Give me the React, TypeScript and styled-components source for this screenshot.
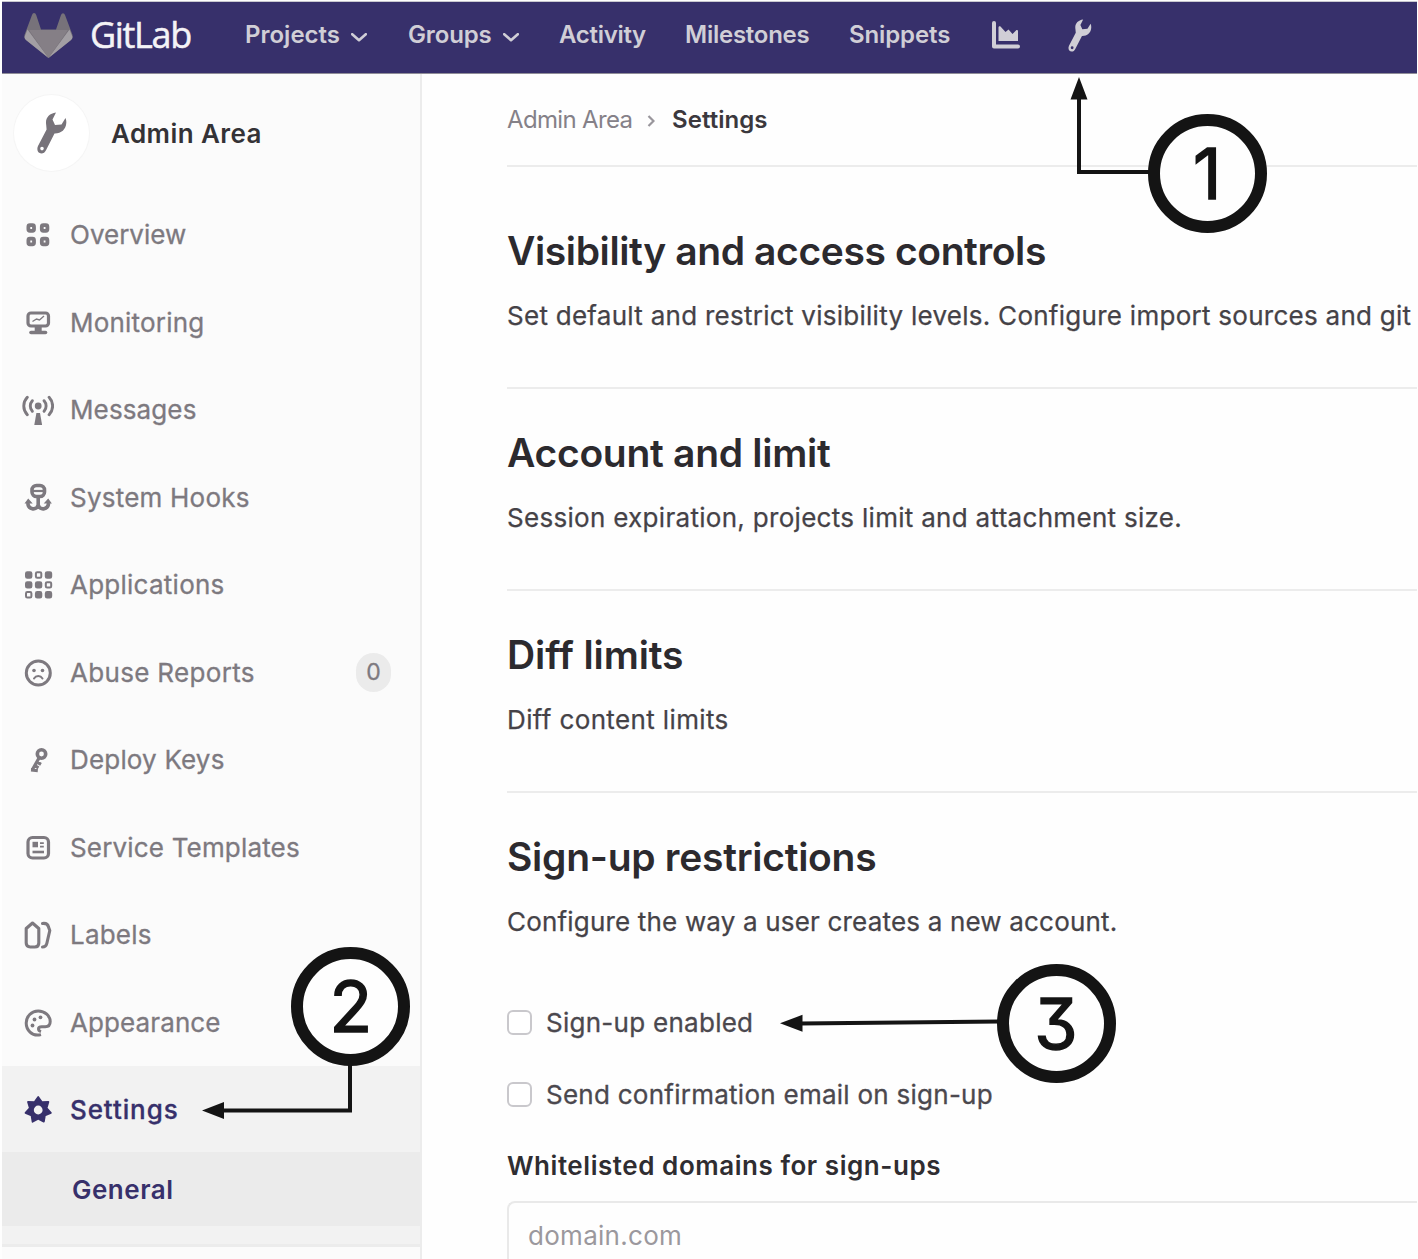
import React from "react";
import styled, { createGlobalStyle } from "styled-components";

const indigo = "#37306b";
const ink = "#141414";

const GlobalStyle = createGlobalStyle`
  * { box-sizing: border-box; }
  html, body { margin: 0; padding: 0; overflow: hidden; background: #fff; }
  body { font-family: Inter, "Liberation Sans", sans-serif; color: #2f2d31; }
  svg { display: block; flex: none; }
`;

const Page = styled.div`
  position: relative;
  width: 1418px;
  height: 1259px;
  padding: 2px 1px 0 2px;
  display: flex;
  flex-direction: column;
  overflow: hidden;
  background: #fefefe;
`;

const Header = styled.header`
  flex: none;
  height: 72px;
  padding: 0 0 7px 22px;
  display: flex;
  align-items: center;
  background: ${indigo};
  border-bottom: 1px solid #8f8d98;
  box-shadow: 0 -1px 0 #c9c8cf;
`;

const Brand = styled.div<{ $track: number }>`
  width: 155px;
  margin-left: 17px;
  padding-top: 1px;
  font: 400 36px/44px "Open Sans", sans-serif;
  letter-spacing: ${(p) => p.$track}px;
  color: #f4f3f6;
  -webkit-text-stroke: 0.5px #f4f3f6;
  white-space: nowrap;
`;

const LogoBox = styled.div`
  padding-top: 3px;
`;

const NavItem = styled.a<{ $width: number; $track: number }>`
  width: ${(p) => p.$width}px;
  padding-top: 1px;
  display: flex;
  align-items: center;
  gap: 11px;
  font-size: 24px;
  font-weight: 600;
  line-height: 30px;
  letter-spacing: ${(p) => p.$track}px;
  color: #d0ced6;
  white-space: nowrap;
`;

const NavIcon = styled.span<{ $width: number }>`
  width: ${(p) => p.$width}px;
  padding-top: 2px;
  color: #d0ced6;
`;

const Body = styled.div`
  flex: 1;
  min-height: 0;
  display: flex;
`;

const Sidebar = styled.aside`
  flex: none;
  width: 420px;
  display: flex;
  flex-direction: column;
  background: #fbfbfb;
  border-right: 2px solid #ececec;
`;

const Context = styled.div`
  flex: none;
  height: 117.25px;
  padding: 21px 0 0 12px;
  display: flex;
  align-items: flex-start;
  gap: 22px;
`;

const Avatar = styled.div`
  width: 75px;
  height: 76px;
  border-radius: 50%;
  background: #fff;
  box-shadow: 0 0 0 1px #f5f5f5;
  display: flex;
  align-items: center;
  justify-content: center;
  color: #77737a;
`;

const ContextTitle = styled.div<{ $track: number }>`
  font-size: 26px;
  font-weight: 600;
  line-height: 78px;
  letter-spacing: ${(p) => p.$track}px;
  color: #343236;
`;

const Item = styled.a<{ $active?: boolean }>`
  flex: none;
  height: ${(p) => (p.$active ? 86 : 87.5)}px;
  padding: ${(p) => (p.$active ? "1px" : "0")} 29px 0 20px;
  display: flex;
  align-items: center;
  gap: 16px;
  color: ${(p) => (p.$active ? indigo : "#7d797f")};
  background: ${(p) => (p.$active ? "#f2f2f2" : "transparent")};
`;

const ItemLabel = styled.span<{ $track: number; $strong?: boolean }>`
  flex: 1;
  font-size: 26px;
  font-weight: ${(p) => (p.$strong ? 500 : 400)};
  line-height: 36px;
  letter-spacing: ${(p) => p.$track}px;
  -webkit-text-stroke: 0.3px currentColor;
  white-space: nowrap;
`;

const Count = styled.span`
  width: 35px;
  height: 39px;
  border-radius: 18px;
  background: #ebebeb;
  font-size: 23px;
  line-height: 39px;
  text-align: center;
  -webkit-text-stroke: 0.3px currentColor;
`;

const SubItem = styled.a<{ $track: number }>`
  flex: none;
  height: 74px;
  padding-left: 70px;
  background: #ebebeb;
  color: ${indigo};
  font-size: 26px;
  font-weight: 600;
  line-height: 75px;
  letter-spacing: ${(p) => p.$track}px;
`;

const SubEnd = styled.div`
  flex: none;
  height: 21px;
  background: #f2f2f2;
  border-bottom: 3px solid #ececec;
`;

const Content = styled.main`
  flex: 1;
  min-width: 0;
  padding-left: 85px;
  display: flex;
  flex-direction: column;
`;

const Crumbs = styled.nav`
  flex: none;
  height: 93px;
  border-bottom: 2px solid #ececec;
  display: flex;
  align-items: flex-start;
  padding-top: 30px;
  font-size: 24px;
  line-height: 32px;
  white-space: nowrap;
`;

const Crumb = styled.span<{ $current?: boolean; $track: number; $width: number }>`
  width: ${(p) => p.$width}px;
  color: ${(p) => (p.$current ? "#3b383d" : "#858188")};
  font-weight: ${(p) => (p.$current ? 600 : 400)};
  letter-spacing: ${(p) => p.$track}px;
`;

const CrumbArrow = styled.span`
  width: 25px;
  padding-top: 11px;
`;

const Section = styled.section<{ $height?: number; $top: number }>`
  flex: none;
  height: ${(p) => (p.$height ? p.$height + "px" : "auto")};
  padding-top: ${(p) => p.$top}px;
  border-bottom: ${(p) => (p.$height ? "2px solid #ececec" : "none")};
  white-space: nowrap;
`;

const Heading = styled.h2<{ $track: number }>`
  margin: 0 0 24px;
  font-size: 39px;
  font-weight: 600;
  line-height: 48px;
  letter-spacing: ${(p) => p.$track}px;
  color: #2c2a2e;
`;

const Description = styled.p<{ $track: number }>`
  margin: 0;
  font-size: 26px;
  line-height: 33px;
  letter-spacing: ${(p) => p.$track}px;
  -webkit-text-stroke: 0.25px currentColor;
  color: #454247;
`;

const Options = styled.div`
  padding-top: 66px;
  display: flex;
  flex-direction: column;
  gap: 36px;
`;

const Option = styled.label<{ $track: number }>`
  display: flex;
  align-items: center;
  gap: 14px;
  height: 36px;
  font-size: 26px;
  letter-spacing: ${(p) => p.$track}px;
  -webkit-text-stroke: 0.3px currentColor;
  color: #4b484e;
`;

const Box = styled.span`
  width: 25px;
  height: 25px;
  border: 2px solid #c9c8cc;
  border-radius: 6px;
  background: #fff;
`;

const FieldLabel = styled.div<{ $track: number }>`
  margin: 36px 0 17px;
  font-size: 26px;
  font-weight: 600;
  line-height: 36px;
  letter-spacing: ${(p) => p.$track}px;
  color: #2f2d31;
`;

const Field = styled.div<{ $track: number }>`
  height: 90px;
  border: 2px solid #e9e9e9;
  border-right: 0;
  border-radius: 8px 0 0 8px;
  padding: 15px 0 0 19px;
  font-size: 26px;
  line-height: 36px;
  letter-spacing: ${(p) => p.$track}px;
  color: #9b989d;
`;

/* Callouts lie over the page they point at. */
const Arrows = styled.svg`
  position: absolute;
  left: 0;
  top: 0;
  pointer-events: none;
`;

const Callout = styled.div<{ $x: number; $y: number }>`
  position: absolute;
  left: ${(p) => p.$x - 59.5}px;
  top: ${(p) => p.$y - 59.5}px;
  width: 119px;
  height: 119px;
  border: 12px solid ${ink};
  border-radius: 50%;
  background: #fefefe;
  color: ${ink};
  font-size: 70px;
  font-weight: 400;
  line-height: 95px;
  text-align: center;
  font-feature-settings: "cv09" 1;
  -webkit-text-stroke: 1.5px ${ink};
  stroke-linejoin: round;
`;

const Wrench = ({ w, h }: { w: number; h: number }) => (
  <svg width={w} height={h} viewBox="0 0 30 42" fill="currentColor">
    <path
      fillRule="evenodd"
      d="M19 .5C12 1.5 8 6 9.200 13l.4 4.500L1 34c-1.700 4 0 7.500 3.300 7.500 2.200 0 3.700-1.300 4.700-3.300l8.500-16.700C24 21.700 29 17.500 29.300 11c.1-2-.1-3.500-.8-5L24.500 12.500 18 13l-2.500-5.500zM5 34.800a1.800 1.800 0 1 0 0 3.600 1.800 1.800 0 0 0 0-3.600z"
    />
  </svg>
);

const Tanuki = () => (
  <svg width="49" height="46" viewBox="0 0 49 46">
    <path fill="#77727a" d="M10 0q1.600 0 2.200 2L17 16.500h15L37 2q.6-1.700 2-1.700T41 2l7.500 20q.6 3-1.500 5L24.500 45 2 27Q-.1 25 .5 22L8 2q.6-2 2-2z" />
    <path fill="#a39fa4" d="M3.500 16.500.5 24q0 2 1.500 3l22.500 18zM45.500 16.500l3 7.500q0 2-1.500 3L24.500 45z" />
    <path fill="#857f86" d="M5 17h39L24.500 45z" />
  </svg>
);

const Chevron = styled.svg`
  margin-top: 5px;
`;

const ChevronDown = () => (
  <Chevron width="16" height="9" viewBox="0 0 16 9" fill="none" stroke="currentColor" strokeWidth="2.600">
    <path d="m1.200 1.200 6.800 6 6.800-6" strokeLinecap="round" strokeLinejoin="round" />
  </Chevron>
);

const ChartIcon = () => (
  <svg width="28" height="28" viewBox="0 0 28 28" fill="currentColor">
    <path d="M2 0a2 2 0 0 1 2 2v21.500h22a2 2 0 0 1 0 4H2a2 2 0 0 1-2-2V2a2 2 0 0 1 2-2z" />
    <path d="M6.500 20V6.500c0-1.200 1.300-1.700 2-.9L13.500 11l3-2.500 4 4.500 3.500-3.500c.8-.8 2-.3 2 .8V20z" />
  </svg>
);

/* Seven pointed teeth: a tip between two valleys. */
const toothed = Array.from({ length: 14 }, (_, i) => {
  const a = (i / 14) * Math.PI * 2 - Math.PI / 2;
  const r = i % 2 === 0 ? 13 : 8.6;
  return `${(16.2 + r * Math.cos(a)).toFixed(2)},${(16 + r * Math.sin(a)).toFixed(2)}`;
}).join(" ");

const glyphs: Record<string, React.ReactNode> = {
  overview: (
    <g fill="none" stroke="currentColor" strokeWidth="3.800">
      {[6.4, 19.8].map((x) => [6.2, 19.7].map((y) => <rect key={`${x}${y}`} x={x} y={y} width="5.600" height="5.600" rx="1.500" />))}
    </g>
  ),
  monitoring: (
    <g fill="none" stroke="currentColor" strokeWidth="3.200">
      <rect x="6" y="6" width="20.500" height="13" rx="3" />
      <path d="m10.500 14.500 4-2.500 3 1 4.500-4" strokeWidth="1.400" />
      <path d="M16.200 19v5" strokeWidth="7" />
      <path d="M9 25.500h14.500" strokeWidth="3.600" strokeLinecap="round" />
    </g>
  ),
  messages: (
    <g fill="none" stroke="currentColor" strokeWidth="2.900" strokeLinecap="round">
      <circle cx="16.200" cy="12" r="3.400" fill="currentColor" stroke="none" />
      <path d="M10.300 6.700a8 8 0 0 0 0 10.600M22.100 6.700a8 8 0 0 1 0 10.600M5.300 3.300c-4.700 5-4.700 12.500 0 17.400M27.100 3.300c4.700 5 4.700 12.500 0 17.400" />
      <path d="m14.400 19-2.100 12h7.800l-2.100-12z" fill="currentColor" stroke="none" />
    </g>
  ),
  hooks: (
    <g fill="none" stroke="currentColor" strokeWidth="3.600">
      <rect x="10" y="3.500" width="12.500" height="11" rx="4.500" />
      <path d="M10 9h12" strokeWidth="2.200" />
      <path d="M16.200 14.500v8.500c-1.200 5.500-9.700 5.500-10.400-2M16.200 23c1.200 5.500 9.700 5.500 10.400-2" />
      <path d="m2.500 21.500 3.700-5 4.500 5zM21.700 21.500l4.500-5 3.700 5z" fill="currentColor" stroke="none" />
    </g>
  ),
  applications: (
    <g fill="none" stroke="currentColor" strokeWidth="2">
      {Array.from({ length: 9 }, (_, i) => (
        <rect key={i} x={4 + (i % 3) * 9.9} y={3.3 + Math.floor(i / 3) * 9.9} width="5.400" height="5.400" rx="1.300" fill={[1, 5, 6].includes(i) ? "none" : "currentColor"} />
      ))}
    </g>
  ),
  abuse: (
    <g fill="none" stroke="currentColor">
      <circle cx="16.300" cy="16" r="12" strokeWidth="3" />
      <circle cx="12" cy="13.500" r="1.800" fill="currentColor" stroke="none" />
      <circle cx="20.500" cy="13.500" r="1.800" fill="currentColor" stroke="none" />
      <path d="M12 21.500c2-3.200 6.500-3.200 8.500 0" strokeWidth="2" strokeLinecap="round" />
    </g>
  ),
  key: (
    <g fill="none" stroke="currentColor" strokeWidth="3.600">
      <circle cx="19.500" cy="10" r="4.200" />
      <path d="m17.300 13.500-7.100 12.500M15 18l4 2.300M9 26l6.800.6M12.500 21.500l4 2.300" strokeWidth="3.200" />
    </g>
  ),
  templates: (
    <g fill="none" stroke="currentColor">
      <rect x="6" y="5.500" width="20.500" height="20.500" rx="4.500" strokeWidth="3.200" />
      <path d="M10.500 9.800h5.500v5.500h-5.500z" fill="currentColor" stroke="none" />
      <path d="M18 11.200h3.800M18 14.700h3.800" strokeWidth="1.700" />
      <path d="M10.500 20h11.500" strokeWidth="2.600" />
    </g>
  ),
  labels: (
    <g fill="none" stroke="currentColor" strokeWidth="3.100" strokeLinejoin="round" strokeLinecap="round">
      <path d="M4.200 9.500 10.500 4l6.300 5.500V24q0 4-4 4H8.200q-4 0-4-4z" />
      <path d="M20.500 4.500c4-.5 5.500 1 6 3.500l1.300 3.500-3 13q-.8 3.500-4.300 3.500" />
    </g>
  ),
  appearance: (
    <g fill="none" stroke="currentColor" strokeWidth="3">
      <path d="M19 27.600C9.500 30 4.200 22.500 4.200 16c0-6.800 5.400-12 12-12 6.800 0 12 5 12 10.500 0 4-2.500 5.300-5 5.300h-3.500q-3.200 0-3.200 2.200 0 1.800 2.500 2.600" strokeLinejoin="round" />
      <g fill="currentColor" stroke="none">
        <circle cx="10.500" cy="18.500" r="1.900" />
        <circle cx="12.500" cy="12.500" r="1.900" />
        <circle cx="18.500" cy="10.300" r="1.900" />
      </g>
    </g>
  ),
  settings: (
    <g>
      <polygon points={toothed} fill="currentColor" stroke="currentColor" strokeWidth="1.800" strokeLinejoin="round" />
      <circle cx="16.200" cy="16" r="4.400" fill="#f2f2f2" />
    </g>
  ),
};

const items = [
  { icon: "overview", label: "Overview", track: 0 },
  { icon: "monitoring", label: "Monitoring", track: 0.2 },
  { icon: "messages", label: "Messages", track: 0.12 },
  { icon: "hooks", label: "System Hooks", track: 0.22 },
  { icon: "applications", label: "Applications", track: 0.25 },
  { icon: "abuse", label: "Abuse Reports", track: 0.32, count: 0 },
  { icon: "key", label: "Deploy Keys", track: 0.18 },
  { icon: "templates", label: "Service Templates", track: 0.17 },
  { icon: "labels", label: "Labels", track: 0.2 },
  { icon: "appearance", label: "Appearance", track: 0.1 },
  { icon: "settings", label: "Settings", track: 0.9, active: true },
];

export default function App() {
  return (
    <Page>
      <GlobalStyle />
      <Header>
        <LogoBox><Tanuki /></LogoBox>
        <Brand $track={-1.35}>GitLab</Brand>
        <NavItem $width={163} $track={0}>Projects<ChevronDown /></NavItem>
        <NavItem $width={151} $track={-0.15}>Groups<ChevronDown /></NavItem>
        <NavItem $width={126} $track={-0.3}>Activity</NavItem>
        <NavItem $width={164} $track={-0.25}>Milestones</NavItem>
        <NavItem $width={143} $track={-0.12}>Snippets</NavItem>
        <NavIcon $width={76}><ChartIcon /></NavIcon>
        <NavIcon $width={30}><Wrench w={24} h={33} /></NavIcon>
      </Header>
      <Body>
        <Sidebar>
          <Context>
            <Avatar><Wrench w={30} h={42} /></Avatar>
            <ContextTitle $track={0.42}>Admin Area</ContextTitle>
          </Context>
          {items.map((it) => (
            <Item key={it.label} $active={it.active}>
              <svg width="32" height="32" viewBox="0 0 32 32">{glyphs[it.icon]}</svg>
              <ItemLabel $track={it.track} $strong={it.active}>{it.label}</ItemLabel>
              {it.count !== undefined && <Count>{it.count}</Count>}
            </Item>
          ))}
          <SubItem $track={0.5}>General</SubItem>
          <SubEnd />
        </Sidebar>
        <Content>
          <Crumbs>
            <Crumb $width={140} $track={-0.65}>Admin Area</Crumb>
            <CrumbArrow>
              <svg width="8" height="12" viewBox="0 0 8 12" fill="none" stroke="#99969c" strokeWidth="2.200"><path d="m1.500 1 5 5-5 5" /></svg>
            </CrumbArrow>
            <Crumb $width={120} $current $track={0.05}>Settings</Crumb>
          </Crumbs>
          <Section $height={222} $top={60}>
            <Heading $track={-0.39}>Visibility and access controls</Heading>
            <Description $track={0.27}>Set default and restrict visibility levels. Configure import sources and git</Description>
          </Section>
          <Section $height={202} $top={40}>
            <Heading $track={-0.28}>Account and limit</Heading>
            <Description $track={0.3}>Session expiration, projects limit and attachment size.</Description>
          </Section>
          <Section $height={202} $top={40}>
            <Heading $track={-0.1}>Diff limits</Heading>
            <Description $track={0.37}>Diff content limits</Description>
          </Section>
          <Section $top={40}>
            <Heading $track={-0.27}>Sign-up restrictions</Heading>
            <Description $track={0.18}>Configure the way a user creates a new account.</Description>
            <Options>
              <Option $track={0.27}><Box />Sign-up enabled</Option>
              <Option $track={0.26}><Box />Send confirmation email on sign-up</Option>
            </Options>
            <FieldLabel $track={0.55}>Whitelisted domains for sign-ups</FieldLabel>
            <Field $track={0.28}>domain.com</Field>
          </Section>
        </Content>
      </Body>
      <Arrows width="1418" height="1259" viewBox="0 0 1418 1259" fill="none" stroke={ink} strokeWidth="4">
        <path d="M1079 96v76h72M350 1060v50.500H220M1000 1021.500l-200 2" />
        <path d="m1079 77 8.500 22.500h-17zM202 1110.500l22-8.500v17zM780 1023.300l22.500-8.500v17z" fill={ink} stroke="none" />
      </Arrows>
      <Callout $x={1207.2} $y={173}>1</Callout>
      <Callout $x={350.8} $y={1006.8}>2</Callout>
      <Callout $x={1056} $y={1023}>3</Callout>
    </Page>
  );
}
